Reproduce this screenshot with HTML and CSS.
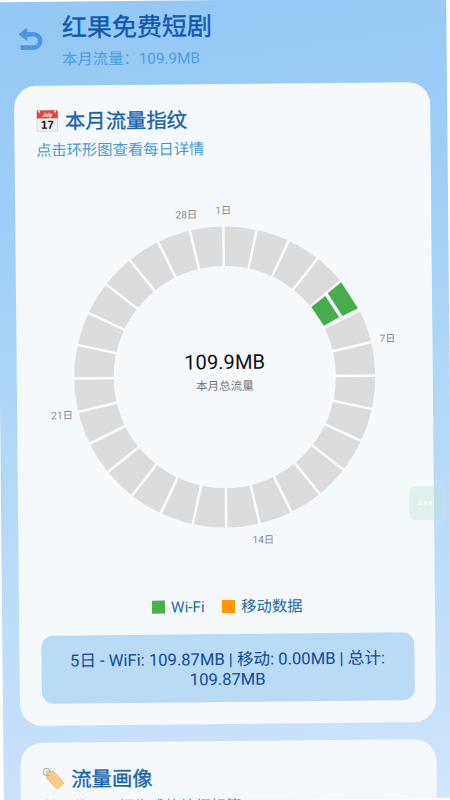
FILE: index.html
```html
<!DOCTYPE html>
<html lang="zh-CN">
<head>
<meta charset="utf-8">
<title>红果免费短剧</title>
<link rel="stylesheet" href="styles.css">
</head>
<body>
<div class="screen">
  <header class="header">
    <svg class="back" viewBox="0 0 26 26"><path d="M7 7.5H15a6.6 6.6 0 0 1 0 13.2H2" fill="none" stroke="#4f97db" stroke-width="4.6"/><path d="M.4 7.5L8.4 1.4V13.6Z" fill="#4f97db" stroke="#4f97db" stroke-width=".8" stroke-linejoin="round"/></svg>
    <div class="titles">
      <h1>红果免费短剧</h1>
      <p>本月流量：109.9MB</p>
    </div>
  </header>
  <main class="cards">
    <section class="card">
      <h2><svg class="emoji" viewBox="0 0 22 22"><rect x=".6" y=".8" width="20.8" height="20.8" rx="1.2" fill="#f4f2f1" stroke="#c9c9c9" stroke-width=".7"/><path d="M.5 1.5Q.5.6 1.5.6H20.5Q21.5.6 21.5 1.5V8.6H.5Z" fill="#e2453c"/><circle cx="2.9" cy="2" r="1" fill="#fff"/><circle cx="19.1" cy="2" r="1" fill="#fff"/><text x="11" y="7" class="cal-month">July</text><text x="11" y="19" class="cal-day">17</text></svg><span>本月流量指纹</span></h2>
      <p class="sub">点击环形图查看每日详情</p>
      <svg class="ring" viewBox="-186 -186 372 372">
        <circle r="130.8" fill="none" stroke="#dcdcdc" stroke-width="39.4"/>
        <g class="gaps">
          <path d="M0-152V152"/>
          <path d="M0-152V152" transform="rotate(12.857)"/>
          <path d="M0-152V152" transform="rotate(25.714)"/>
          <path d="M0-152V152" transform="rotate(38.571)"/>
          <path d="M0-152V152" transform="rotate(51.429)"/>
          <path d="M0-152V152" transform="rotate(64.286)"/>
          <path d="M0-152V152" transform="rotate(77.143)"/>
          <path d="M0-152V152" transform="rotate(90)"/>
          <path d="M0-152V152" transform="rotate(102.857)"/>
          <path d="M0-152V152" transform="rotate(115.714)"/>
          <path d="M0-152V152" transform="rotate(128.571)"/>
          <path d="M0-152V152" transform="rotate(141.429)"/>
          <path d="M0-152V152" transform="rotate(154.286)"/>
          <path d="M0-152V152" transform="rotate(167.143)"/>
        </g>
        <path d="M86-71L116-96L137-68L101-49Z" fill="#f5f9fc"/>
        <path d="M87.2-69.2L101.3-80L115-58.6L99.7-50.2ZM103.8-82.8L117.3-93.6L133.8-67.4L118.3-59.8Z" fill="#47ac4c"/>
        <g class="days">
          <text x="0" y="-163">1日</text>
          <text x="163" y="-33.5">7日</text>
          <text x="37" y="166.5">14日</text>
          <text x="-163" y="40.5">21日</text>
          <text x="-37" y="-159">28日</text>
        </g>
        <text class="total" x="0" y="-8">109.9MB</text>
        <text class="caption" x="0" y="13">本月总流量</text>
      </svg>
      <div class="legend">
        <span class="item"><i class="swatch wifi"></i>Wi-Fi</span>
        <span class="item"><i class="swatch mobile"></i>移动数据</span>
      </div>
      <div class="detail">5日 - WiFi: 109.87MB | 移动: 0.00MB | 总计:<br>109.87MB</div>
    </section>
    <section class="card next">
      <h2><svg class="emoji" viewBox="0 0 22 22"><path d="M3.6 3.2L11.5 3.8L21.4 15.4L14.6 21.6L4.2 10.8Z" fill="#f6cd8c" stroke="#e5ad5f" stroke-width=".6"/><circle cx="4" cy="4.2" r="3.4" fill="none" stroke="#9bb0bc" stroke-width="1"/><circle cx="7" cy="6.6" r="1.2" fill="#fff" stroke="#b98b4a" stroke-width=".5"/></svg><span>流量画像</span></h2>
      <p class="sub">基于使用习惯生成的特征标签</p>
    </section>
  </main>
</div>
<div class="float"><span></span><span></span><span></span></div>
</body>
</html>
```
FILE: styles.css
```css
* { box-sizing: border-box; }
html, body { margin: 0; width: 450px; height: 800px; overflow: hidden; background: #fff; }
body { font-family: Roboto, "Noto Sans CJK SC", sans-serif; position: relative; }
.screen {
  width: 450px; height: 800px; overflow: hidden;
  transform: rotate(-0.55deg);
  background: linear-gradient(172deg, #94c8f5 0%, #9dcef7 25%, #b4daf8 60%, #c8e0f8 88%, #d2e6fa 100%);
}
h1, h2, p { margin: 0; font-weight: 400; }
.header { display: flex; height: 83.5px; padding: 10px 0 0 21.5px; }
.back { width: 26px; height: 26px; margin-top: 14.5px; }
.titles { margin-left: 18px; }
h1 { font-size: 25px; line-height: 34px; color: #1259ae; -webkit-text-stroke: .4px #1259ae; }
.titles p { font-size: 15.3px; line-height: 20px; margin-top: 3.5px; color: #4da0dd; }
.cards { display: flex; flex-direction: column; gap: 17px; padding: 0 17px 0 17px; }
.card { height: 640.3px; flex: none; padding: 21.5px; border-radius: 22px; background: #f5f9fc; display: flex; flex-direction: column; }
h2 { display: flex; align-items: center; gap: 7px; height: 28px; font-size: 20.4px; line-height: 28px; color: #1763ad; -webkit-text-stroke: .35px #1763ad; }
h2 span { padding-top: 1.5px; }
.emoji { width: 22px; height: 22px; flex: none; -webkit-text-stroke: 0; }
.cal-month { font: italic 700 5.5px Roboto, sans-serif; fill: #fff; text-anchor: middle; }
.cal-day { font: 700 11.5px "Liberation Sans", sans-serif; fill: #111; text-anchor: middle; }
.sub { font-size: 15.3px; line-height: 20px; margin-top: 6px; color: #4b9bd0; }
.ring { width: 372px; height: 372px; margin-top: 31.5px; flex: none; }
.gaps path { stroke: #f9fcfd; stroke-width: 2.5; stroke-dasharray: 42 220 42; fill: none; }
.days text { font-size: 10.2px; fill: #888; text-anchor: middle; }
.total { font-size: 20.2px; fill: #111; text-anchor: middle; }
.caption { font-size: 11.6px; fill: #777; text-anchor: middle; }
.legend { display: flex; justify-content: center; gap: 17px; height: 22px; margin-top: 33px; font-size: 15.3px; line-height: 22px; color: #2369a8; }
.item { display: flex; align-items: center; gap: 6.5px; }
.swatch { width: 13px; height: 13px; }
.wifi { background: #4bac50; }
.mobile { background: #ff9500; }
.detail { height: 68px; margin-top: auto; padding-top: 16px; border-radius: 12px; background: #b8dbf6; color: #114b98; font-size: 16.6px; line-height: 19.5px; text-align: center; white-space: nowrap; }
.next { padding-top: 22px; }
.next .sub { margin-top: 5px; }
.float { position: absolute; left: 408.5px; top: 486px; width: 34px; height: 34px; border-radius: 7px; background: rgba(195, 228, 212, .42); display: flex; align-items: center; justify-content: center; gap: 2px; box-shadow: 0 0 9px 4px rgba(255, 255, 255, .12); }
.float span { width: 3.2px; height: 3.2px; border-radius: 50%; background: rgba(255, 255, 255, .9); }
```
